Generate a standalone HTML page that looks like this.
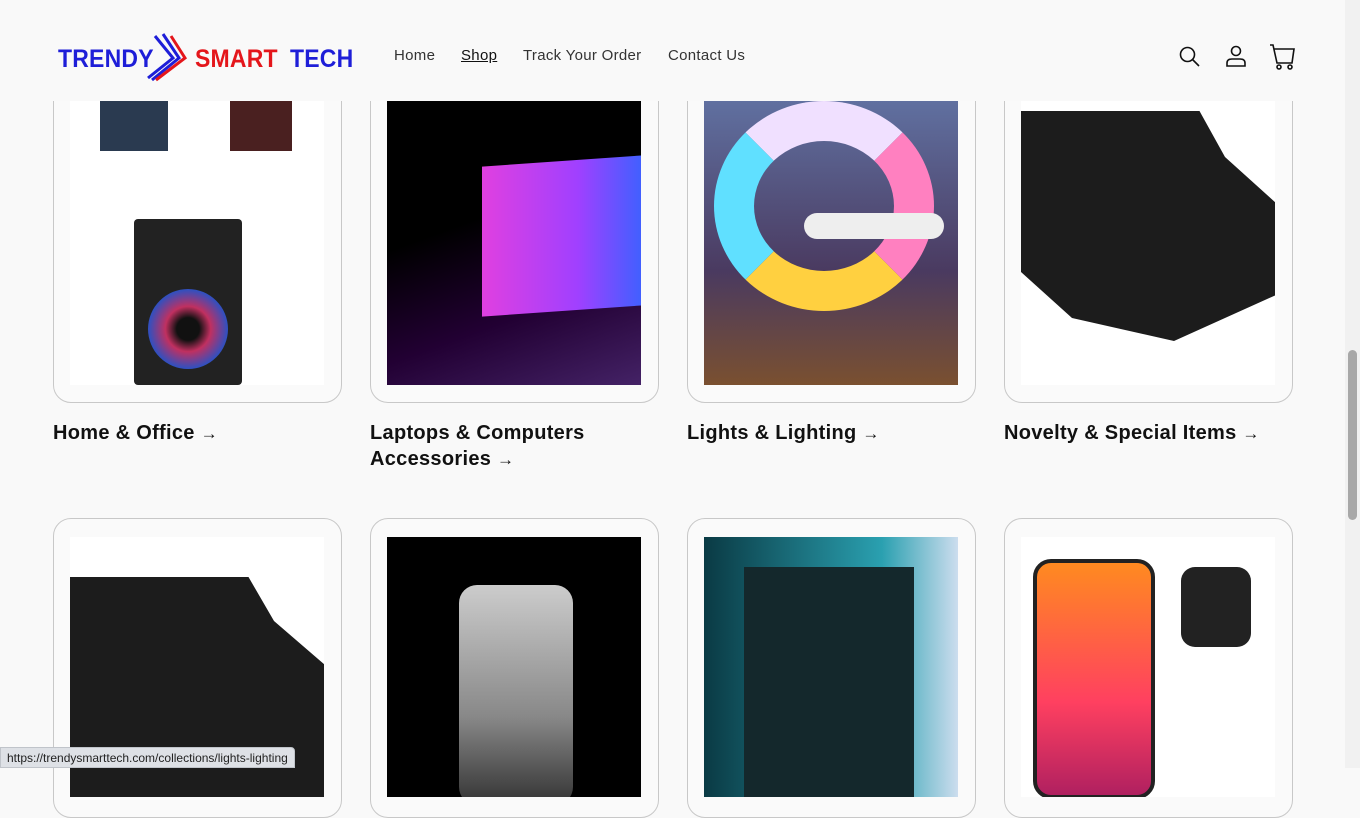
<!DOCTYPE html>
<html><head><meta charset="utf-8"><style>
*{margin:0;padding:0;box-sizing:border-box}
body{width:1360px;height:768px;overflow:hidden;background:#f9f9f9;font-family:"Liberation Sans",sans-serif;position:relative}
.hdr{position:absolute;left:0;top:0;width:1345px;height:101px;background:#f9f9f9;z-index:5}
.lg{position:absolute;top:44px;font-weight:bold;font-size:23px;transform:scaleY(1.1);transform-origin:top left;letter-spacing:0.2px}
.nav{position:absolute;top:47px;font-size:15px;color:#333;letter-spacing:.3px}
.card{position:absolute;width:289px;border:1px solid #c8c8c8;border-radius:18px;background:#fafafa}
.img{position:absolute;left:16px;width:254px;overflow:hidden}
.t{position:absolute;font-weight:bold;font-size:20px;color:#111;line-height:26px;letter-spacing:.3px}
.t span{font-size:17px}
.sb{position:absolute;right:0;top:0;width:15px;height:768px;background:#f1f1f1}
</style></head><body>
<div class="hdr">
<div class="lg" style="left:58px;color:#1e1ed8">TRENDY</div>
<div class="lg" style="left:195px;color:#e4161b">SMART</div>
<div class="lg" style="left:290px;color:#1e1ed8">TECH</div>
<svg style="position:absolute;left:143px;top:30px" width="52" height="52" viewBox="0 0 52 52"><path d="M5 48 L30 28 L12 6 M9 50 L36 28 L20 4" stroke="#1e1ed8" stroke-width="3" fill="none"/><path d="M13 50 L42 28 L28 6" stroke="#e4161b" stroke-width="3" fill="none"/></svg>
<div class="nav" style="left:394px">Home</div>
<div class="nav" style="left:461px;color:#111;text-decoration:underline">Shop</div>
<div class="nav" style="left:523px">Track Your Order</div>
<div class="nav" style="left:668px">Contact Us</div>
<svg style="position:absolute;left:1178px;top:45px" width="24" height="24" viewBox="0 0 24 24" fill="none" stroke="#111" stroke-width="1.6"><circle cx="9.5" cy="9.5" r="7"/><path d="M14.5 14.5 L21 21"/></svg>
<svg style="position:absolute;left:1224px;top:44px" width="24" height="24" viewBox="0 0 24 24" fill="none" stroke="#111" stroke-width="1.6"><circle cx="12" cy="7" r="4.5"/><path d="M3 22 V19 Q3 15 8 15 H16 Q21 15 21 19 V22 Z"/></svg>
<svg style="position:absolute;left:1268px;top:43px" width="28" height="28" viewBox="0 0 28 28" fill="none" stroke="#111" stroke-width="1.6"><path d="M2 2 H5 L9 20 H24 L26 6 H6"/><circle cx="11" cy="24" r="2"/><circle cx="22" cy="24" r="2"/></svg>
</div>
<!-- row 1 -->
<div class="card" style="left:53px;top:60px;height:343px"><div class="img" style="top:40px;height:284px;background:#fff">
<div style="position:absolute;left:30px;top:0;width:68px;height:50px;background:#2a3a50"></div>
<div style="position:absolute;left:160px;top:0;width:62px;height:50px;background:#4a2020"></div>
<div style="position:absolute;left:64px;top:118px;width:108px;height:166px;background:#222;border-radius:4px"><div style="position:absolute;left:14px;top:70px;width:80px;height:80px;border-radius:50%;background:radial-gradient(#111 20%,#c03060 40%,#3050c0 70%,#222)"></div></div></div></div>
<div class="card" style="left:370px;top:60px;height:343px"><div class="img" style="top:40px;height:284px;background:linear-gradient(160deg,#000 40%,#203 70%,#426 100%)">
<div style="position:absolute;left:95px;top:60px;width:160px;height:150px;background:linear-gradient(90deg,#e040e0,#a040ff 60%,#4060ff);transform:skewY(-4deg)"></div></div></div>
<div class="card" style="left:687px;top:60px;height:343px"><div class="img" style="top:40px;height:284px;background:linear-gradient(180deg,#6070a0,#4a3a60 60%,#7a5030)">
<div style="position:absolute;left:10px;top:0;width:220px;height:210px;border-radius:50%;border:40px solid #e0d0f0;border-color:#f0e0ff #ff80c0 #ffd040 #60e0ff"></div>
<div style="position:absolute;left:100px;top:112px;width:140px;height:26px;background:#eee;border-radius:13px"></div></div></div>
<div class="card" style="left:1004px;top:60px;height:343px"><div class="img" style="top:40px;height:284px;background:#fff">
<div style="position:absolute;left:0;top:10px;width:255px;height:230px;background:#1c1c1c;clip-path:polygon(0 0,70% 0,80% 20%,100% 40%,100% 80%,60% 100%,20% 90%,0 70%)"></div></div></div>
<div class="t" style="left:53px;top:420px">Home &amp; Office <span>→</span></div>
<div class="t" style="left:370px;top:420px">Laptops &amp; Computers<br>Accessories <span>→</span></div>
<div class="t" style="left:687px;top:420px">Lights &amp; Lighting <span>→</span></div>
<div class="t" style="left:1004px;top:420px">Novelty &amp; Special Items <span>→</span></div>
<!-- row 2 -->
<div class="card" style="left:53px;top:518px;height:300px"><div class="img" style="top:18px;height:260px;background:#fff">
<div style="position:absolute;left:0;top:40px;width:255px;height:220px;background:#1c1c1c;clip-path:polygon(0 0,70% 0,80% 20%,100% 40%,100% 100%,0 100%)"></div></div></div>
<div class="card" style="left:370px;top:518px;height:300px"><div class="img" style="top:18px;height:260px;background:#000">
<div style="position:absolute;left:72px;top:48px;width:114px;height:220px;border-radius:18px;background:linear-gradient(180deg,#ccc,#888 60%,#333)"></div></div></div>
<div class="card" style="left:687px;top:518px;height:300px"><div class="img" style="top:18px;height:260px;background:linear-gradient(90deg,#0a3a44,#2aa0b0 70%,#cde)">
<div style="position:absolute;left:40px;top:30px;width:170px;height:240px;background:#14282c"></div></div></div>
<div class="card" style="left:1004px;top:518px;height:300px"><div class="img" style="top:18px;height:260px;background:#fff">
<div style="position:absolute;left:12px;top:22px;width:122px;height:240px;border-radius:18px;background:linear-gradient(180deg,#ff8a20,#ff4060 60%,#b02060);border:4px solid #222"></div>
<div style="position:absolute;left:160px;top:30px;width:70px;height:80px;border-radius:14px;background:#222"></div></div></div>
<div class="sb"><div style="position:absolute;left:3px;top:350px;width:9px;height:170px;background:#a8a8a8;border-radius:5px"></div></div>
<div style="position:absolute;left:0;top:747px;height:21px;padding:3px 6px;background:#dee1e6;border:1px solid #c0c4ca;font-size:12px;color:#222;border-radius:0 4px 0 0">https://trendysmarttech.com/collections/lights-lighting</div>
</body></html>
